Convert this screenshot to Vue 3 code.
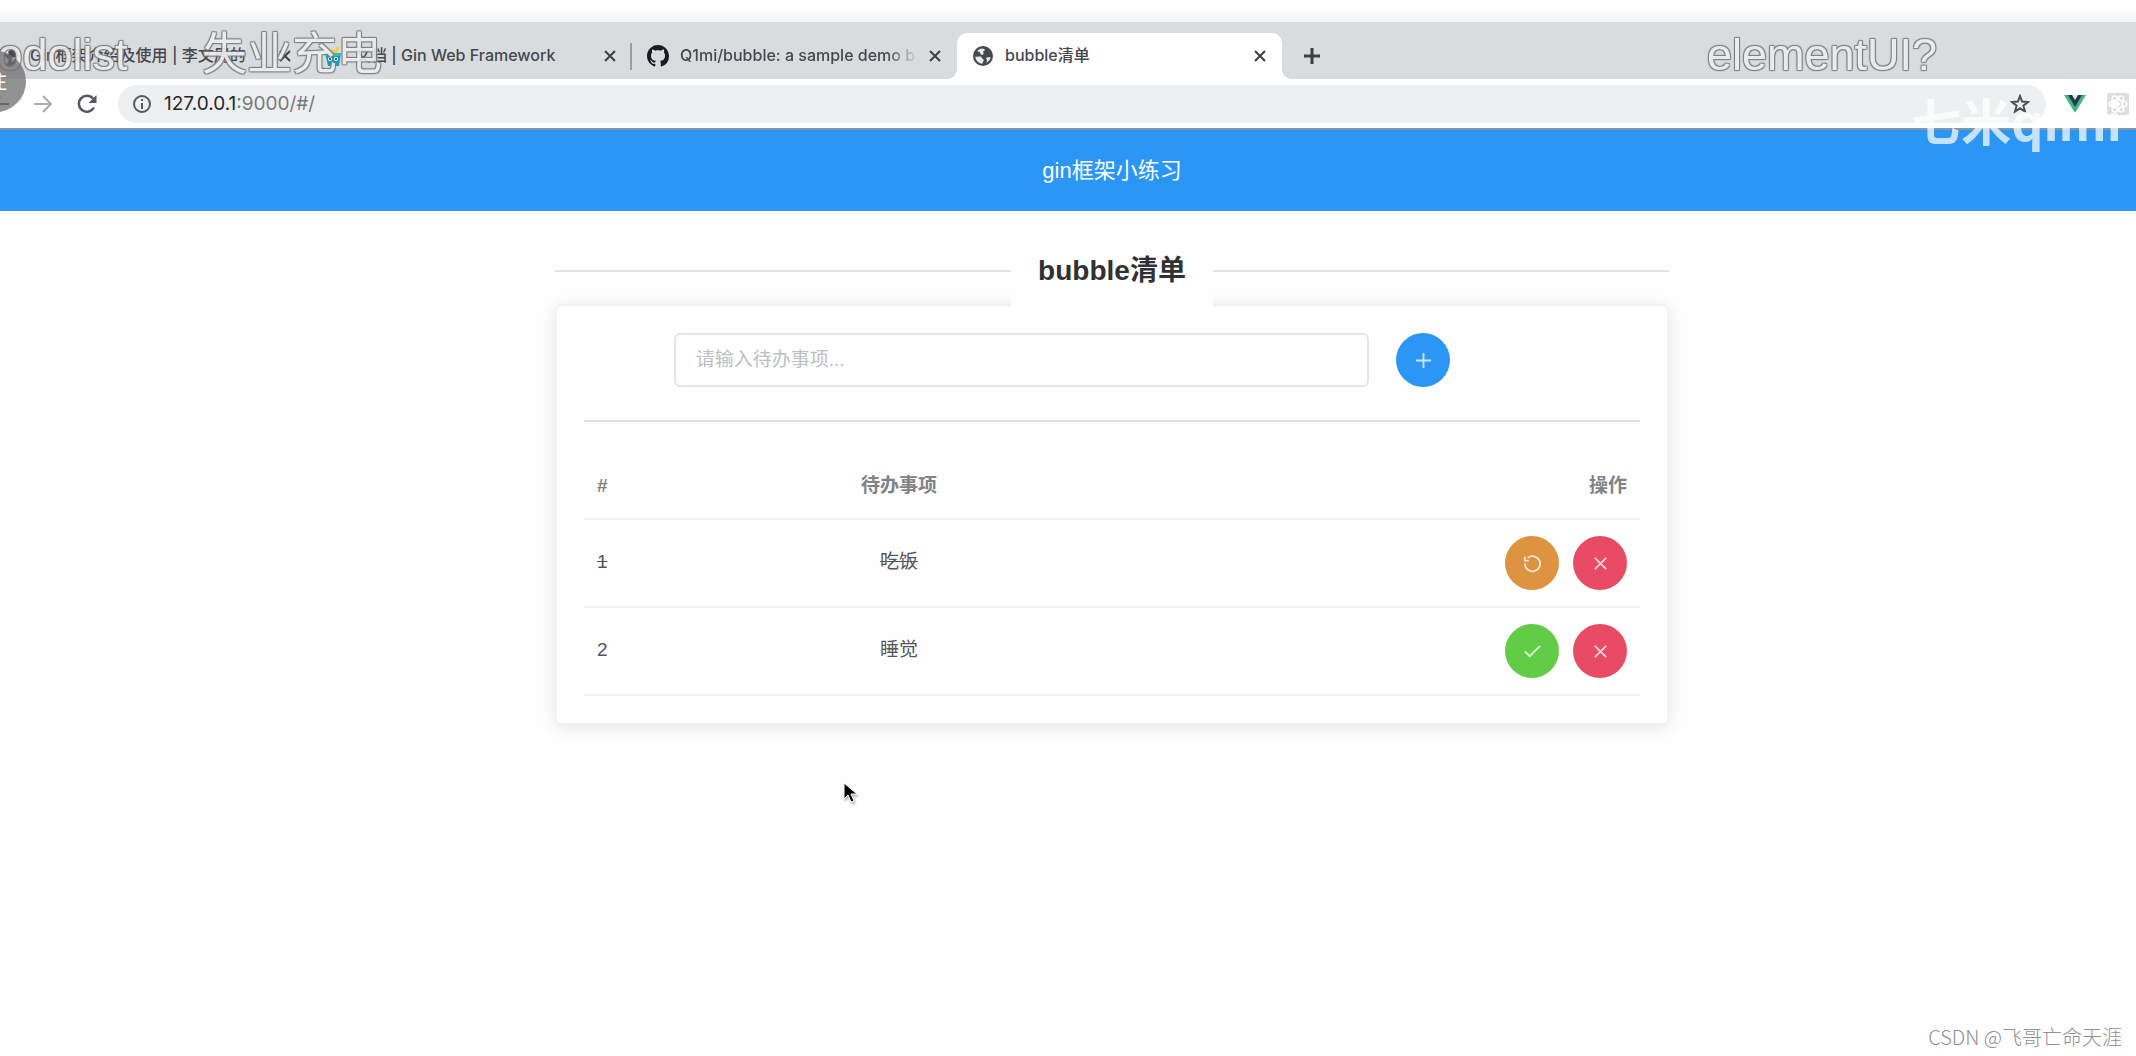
<script setup>
import { ref } from 'vue'

const tabs = [
  { icon: 'globe', title: 'Gin框架介绍及使用 | 李文周的' },
  { icon: 'gin', title: '文档 | Gin Web Framework', line: true },
  { icon: 'github', title: 'Q1mi/bubble: a sample demo b', fade: true },
  { icon: 'globe', title: 'bubble清单', active: true },
]

const draft = ref('')
const todos = ref([
  { title: '吃饭', done: true },
  { title: '睡觉', done: false },
])

function add() {
  const title = draft.value.trim()
  if (!title) return
  todos.value.push({ title, done: false })
  draft.value = ''
}
</script>

<template>
  <div class="screen">
    <div class="desk"></div>
    <nav class="tabs">
      <div v-for="(tab, i) in tabs" :key="i" class="tab" :class="{ active: tab.active, line: tab.line }">
        <svg v-if="tab.icon === 'globe'" class="fav" viewBox="0 0 22 22">
          <circle cx="11" cy="11" r="10" fill="#45484c" />
          <path d="M10.500 3.500C8.500 3.600 6.300 4.600 5 6.300c1.500.2 3 .5 3.300 1.900.3 1.300 1 1.800 2.200 1.600 1.300-.2 1.300-1.500.8-2.300-.5-1 .6-1.600 1.500-1.900.6-.4-.2-1.700-2.300-2.100zM3.200 11.500c.3 3.700 3.300 7 7.300 7.300.4-1.300 0-1.900.9-2.600.8-.7.300-1.800-.5-2.200-1.500-.5-1-2.300-2.700-2.400-1.800-.1-3.500.4-5-.1zM15 12.500c-1.300.4-.9 1.700-.3 2.300.7.700.1 1.800-.4 3 2.200-1.100 3.800-2.800 4.400-5.200-1-.4-2.500-.4-3.700-.1z" fill="#e9ebed" />
        </svg>
        <svg v-else-if="tab.icon === 'gin'" class="fav" viewBox="0 0 22 22">
          <path d="M3 8h16l-2 13H6z" fill="#159fc6" />
          <path d="M8 8l1-4 4 1 2-4 2 1-1 6z" fill="#f6cf3d" />
          <path d="M3 8h16l-1 3H4z" fill="#36b7d8" />
          <circle cx="8" cy="14" r="2" fill="#fff" /><circle cx="14" cy="14" r="2" fill="#fff" />
          <circle cx="8" cy="14" r="1" fill="#234" /><circle cx="14" cy="14" r="1" fill="#234" />
        </svg>
        <svg v-else class="fav" viewBox="0 0 16 16">
          <path fill="#191c20" d="M8 0C3.58 0 0 3.58 0 8c0 3.54 2.290 6.530 5.470 7.590.4.070.550-.170.550-.380 0-.190-.010-.820-.010-1.490-2.010.370-2.530-.490-2.690-.940-.090-.230-.480-.940-.820-1.130-.280-.150-.680-.520-.010-.530.630-.010 1.080.580 1.230.820.720 1.210 1.870.870 2.330.660.070-.520.280-.870.510-1.070-1.780-.2-3.640-.890-3.640-3.950 0-.870.310-1.590.820-2.150-.080-.2-.360-1.020.080-2.120 0 0 .670-.210 2.200.820.640-.180 1.320-.270 2-.270s1.360.090 2 .270c1.530-1.040 2.200-.820 2.200-.820.440 1.100.160 1.920.080 2.120.510.560.820 1.270.820 2.150 0 3.070-1.870 3.750-3.650 3.950.290.250.540.730.540 1.480 0 1.070-.010 1.930-.010 2.200 0 .210.150.460.550.380A8.010 8.010 0 0 0 16 8c0-4.420-3.580-8-8-8z" />
        </svg>
        <span class="tab-title" :class="{ fade: tab.fade }">{{ tab.title }}</span>
        <button class="plain" aria-label="关闭标签页">
          <svg width="12" height="12" viewBox="0 0 12 12"><path d="M1 1l10 10M11 1L1 11" stroke="#3c4043" stroke-width="2" /></svg>
        </button>
      </div>
      <button class="plain new-tab" aria-label="新标签页">
        <svg width="16" height="16" viewBox="0 0 16 16"><path d="M8 0v16M0 8h16" stroke="#3c4043" stroke-width="3" /></svg>
      </button>
    </nav>

    <div class="toolbar">
      <button class="plain" aria-label="后退">
        <svg width="18" height="18" viewBox="0 0 18 18" fill="none" stroke="#4c4f53" stroke-width="2"><path d="M18 9H2M9 1L1 9l8 8" /></svg>
      </button>
      <button class="plain" aria-label="前进">
        <svg width="18" height="18" viewBox="0 0 18 18" fill="none" stroke="#a9abae" stroke-width="2"><path d="M0 9h16M9 1l8 8-8 8" /></svg>
      </button>
      <button class="plain" aria-label="重新加载">
        <svg width="20" height="20" viewBox="0 0 20 20"><path d="M17 13.500A8 8 0 1 1 16 4.500" fill="none" stroke="#55585c" stroke-width="2.500" /><path d="M19.500 1v8h-8z" fill="#55585c" /></svg>
      </button>
      <div class="address">
        <svg width="20" height="20" viewBox="0 0 20 20"><circle cx="10" cy="10" r="8" fill="none" stroke="#55585c" stroke-width="2" /><path d="M10 9v6M10 5v2" stroke="#55585c" stroke-width="2" /></svg>
        <span class="url">127.0.0.1<i>:9000/#/</i></span>
        <button class="plain" aria-label="收藏">
          <svg width="20" height="20" viewBox="0 0 20 20"><path d="M10 2l2.100 5.600 5.900.4-4.600 3.700 1.600 5.800L10 14.300l-5 3.200 1.600-5.800L2 8l5.900-.4z" fill="none" stroke="#4c4f53" stroke-width="2" /></svg>
        </button>
      </div>
      <svg class="ext" viewBox="0 0 22 22"><path d="M0 2h22L11 20z" fill="#41b883" /><path d="M4 2h14l-7 12z" fill="#26394d" /><path d="M8 2h6l-3 5z" fill="#dfe9e6" /></svg>
      <svg class="ext" viewBox="0 0 22 22"><rect width="22" height="22" rx="2" fill="#dedede" /><g fill="none" stroke="#fff" stroke-width="1.500"><ellipse cx="11" cy="11" rx="9" ry="4" /><ellipse cx="11" cy="11" rx="9" ry="4" transform="rotate(60 11 11)" /><ellipse cx="11" cy="11" rx="9" ry="4" transform="rotate(120 11 11)" /></g><circle cx="11" cy="11" r="2" fill="#fff" /></svg>
    </div>

    <header class="banner">gin框架小练习</header>

    <main class="page">
      <div class="column">
        <div class="heading"><h1>bubble清单</h1></div>
        <section class="card">
          <form class="entry" @submit.prevent="add">
            <input v-model="draft" type="text" aria-label="待办事项" placeholder="请输入待办事项..." />
            <button class="round blue" aria-label="添加">
              <svg viewBox="0 0 20 20"><path d="M10 2v16M2 10h16" /></svg>
            </button>
          </form>
          <hr />
          <table>
            <thead>
              <tr><th class="num">#</th><th class="what">待办事项</th><th class="ops">操作</th></tr>
            </thead>
            <tbody>
              <tr v-for="(todo, i) in todos" :key="i" :class="{ done: todo.done }">
                <td class="num">{{ i + 1 }}</td>
                <td class="what">{{ todo.title }}</td>
                <td class="ops">
                  <div class="actions">
                    <button v-if="todo.done" class="round orange" aria-label="撤销" @click="todo.done = false">
                      <svg viewBox="0 0 20 20"><path d="M2 10a8 8 0 1 0 3-6M2 3v4h4" /></svg>
                    </button>
                    <button v-else class="round green" aria-label="完成" @click="todo.done = true">
                      <svg viewBox="0 0 20 20"><path d="M2 10l5 5 11-11" /></svg>
                    </button>
                    <button class="round red" aria-label="删除" @click="todos.splice(i, 1)">
                      <svg viewBox="0 0 20 20"><path d="M4 4l12 12M16 4L4 16" /></svg>
                    </button>
                  </div>
                </td>
              </tr>
            </tbody>
          </table>
        </section>
      </div>
    </main>

    <div class="bullet first">todolist</div>
    <div class="bullet second">失业充电</div>
    <div class="bullet third">elementUI?</div>
    <div class="follow">关注</div>
    <div class="author">七米qimi</div>
    <svg class="pointer" viewBox="0 0 16 22"><path d="M1 1v16l4-4 3 7 3-1-3-7h6z" fill="#000" stroke="#fff" stroke-width="1" /></svg>
    <div class="credit">CSDN @飞哥亡命天涯</div>
  </div>
</template>

<style>
body {
  margin: 0;
}
</style>

<style scoped>
* {
  box-sizing: border-box;
}
.screen {
  position: relative;
  min-height: 100vh;
  overflow: hidden;
  background: #fefefe;
  color: #555659;
  font-family: "Liberation Sans", "Noto Sans CJK SC", sans-serif;
  font-size: 19px;
}
svg {
  display: block;
  flex: none;
}
.plain {
  padding: 0;
  border: 0;
  background: none;
}
.desk {
  height: 22px;
  background: linear-gradient(#fff 30%, #f4f4f4);
}
.tabs {
  display: flex;
  height: 57px;
  padding-top: 11px;
  background: #d9dcdf;
  font-family: Inter, "Noto Sans CJK SC", sans-serif;
  font-size: 16px;
  font-weight: 500;
  line-height: 20px;
  color: #45484c;
}
.tab {
  position: relative;
  display: flex;
  flex: none;
  align-items: center;
  gap: 11px;
  width: 325px;
  padding: 0 16px 0 15px;
}
.tab:first-child {
  margin-left: -18px;
}
.tab.line::after {
  content: "";
  position: absolute;
  right: 0;
  top: 10px;
  width: 2px;
  height: 27px;
  background: #9a9da0;
}
.tab.active {
  background: #fff;
  border-radius: 10px 10px 0 0;
}
.tab.active::before,
.tab.active::after {
  content: "";
  position: absolute;
  bottom: 0;
  width: 10px;
  height: 10px;
}
.tab.active::before {
  right: 100%;
  background: radial-gradient(circle at 0 0, transparent 10px, #fff 10px);
}
.tab.active::after {
  left: 100%;
  background: radial-gradient(circle at 100% 0, transparent 10px, #fff 10px);
}
.fav,
.ext {
  width: 22px;
  height: 22px;
}
.tab-title {
  flex: 1;
  overflow: hidden;
  padding-bottom: 2px;
  white-space: nowrap;
}
.tab-title.fade {
  -webkit-mask-image: linear-gradient(to left, transparent, #000 32px);
  mask-image: linear-gradient(to left, transparent, #000 32px);
}
.new-tab {
  margin-left: 22px;
}
.toolbar {
  display: flex;
  align-items: center;
  gap: 21px;
  height: 51px;
  padding: 0 7px 0 0;
  border-bottom: 2px solid #8296aa;
  background: #fff;
}
.toolbar > .plain:first-child {
  margin-left: -9px;
}
.toolbar > .plain + .plain {
  margin-left: 4px;
}
.address {
  display: flex;
  flex: 1;
  align-items: center;
  gap: 12px;
  height: 38px;
  margin-right: -3px;
  padding: 0 16px 0 14px;
  border-radius: 19px;
  background: #eeeff1;
}
.url {
  flex: 1;
  font-family: Inter, sans-serif;
  font-size: 19px;
  color: #25272a;
}
.url i {
  font-style: normal;
  color: #77797c;
}
.banner {
  height: 81px;
  padding-left: 88px;
  background: #2c96f7;
  color: #fff;
  font-size: 22px;
  line-height: 81px;
  text-align: center;
}
.page {
  display: flex;
  justify-content: center;
  padding-left: 88px;
}
.column {
  width: 54.4%;
  padding-top: 24px;
}
.heading {
  position: relative;
  z-index: 1;
  display: flex;
  align-items: center;
  height: 72px;
  margin-bottom: -3px;
}
.heading::before,
.heading::after {
  content: "";
  flex: 1;
  height: 2px;
  background: #e2e3e8;
}
h1 {
  margin: 0;
  padding: 0 27px;
  background: #fefefe;
  color: #303133;
  font-size: 28px;
  line-height: 72px;
}
.card {
  padding: 27px;
  border: 2px solid #f0f1f5;
  border-radius: 6px;
  background: #fefefe;
  box-shadow: 0 3px 16px rgba(0, 0, 0, 0.1);
}
.entry {
  display: flex;
  gap: 27px;
  padding-left: 8.5%;
}
.entry input {
  width: 72%;
  height: 54px;
  padding: 0 20px;
  border: 2px solid #e4e5ea;
  border-radius: 6px;
  background: #fff;
  font: inherit;
  color: #555659;
}
.entry input::placeholder {
  color: #bcbec3;
}
hr {
  height: 2px;
  margin: 33px 0 31px;
  border: 0;
  background: #e0e1e4;
}
table {
  width: 100%;
  border-collapse: collapse;
  table-layout: fixed;
}
th,
td {
  height: 88px;
  padding: 0 13px;
  border-bottom: 2px solid #f0f1f5;
  line-height: 20px;
  text-align: center;
}
th {
  height: 66px;
  color: #808286;
}
.num {
  width: 68px;
  text-align: left;
}
td.num,
td.what {
  padding-bottom: 2px;
}
.ops {
  text-align: right;
}
.done .num,
.done .what {
  text-decoration: line-through;
}
.actions {
  display: flex;
  justify-content: flex-end;
  gap: 14px;
}
.round {
  display: flex;
  flex: none;
  align-items: center;
  justify-content: center;
  width: 54px;
  height: 54px;
  padding: 0;
  border: 0;
  border-radius: 50%;
}
.round svg {
  width: 19px;
  height: 19px;
  fill: none;
  stroke: #fff;
  stroke-opacity: 0.75;
  stroke-width: 2;
}
.blue {
  background: #2c96f7;
}
.orange {
  background: #dd933f;
}
.green {
  background: #62cc47;
}
.red {
  background: #e94b64;
}
.bullet {
  position: absolute;
  top: 29px;
  color: #ededee;
  font-size: 45px;
  line-height: 52px;
  white-space: nowrap;
  text-shadow: 1px 1px 1px #77797c, -1px -1px 1px #77797c, 1px -1px 1px #77797c, -1px 1px 1px #77797c;
  opacity: 0.9;
}
.first {
  left: -15px;
}
.second {
  left: 202px;
}
.third {
  left: 1707px;
}
.follow {
  position: absolute;
  left: -35px;
  top: 51px;
  width: 61px;
  height: 61px;
  padding-right: 19px;
  border-radius: 50%;
  background: rgba(110, 110, 110, 0.75);
  color: #fff;
  font-size: 20px;
  line-height: 63px;
  text-align: right;
  white-space: nowrap;
}
.author {
  position: absolute;
  right: 14px;
  top: 87px;
  color: rgba(255, 255, 255, 0.72);
  font-family: "Noto Sans CJK SC", sans-serif;
  font-size: 50px;
  font-weight: bold;
  line-height: 64px;
}
.pointer {
  position: absolute;
  left: 843px;
  top: 782px;
  width: 16px;
  height: 22px;
  filter: drop-shadow(1px 2px 1px rgba(0, 0, 0, 0.3));
}
.credit {
  position: absolute;
  right: 14px;
  bottom: 5px;
  color: #909193;
  font-family: "Noto Sans CJK SC", sans-serif;
  font-size: 20px;
  font-weight: 300;
  line-height: 28px;
}
</style>
